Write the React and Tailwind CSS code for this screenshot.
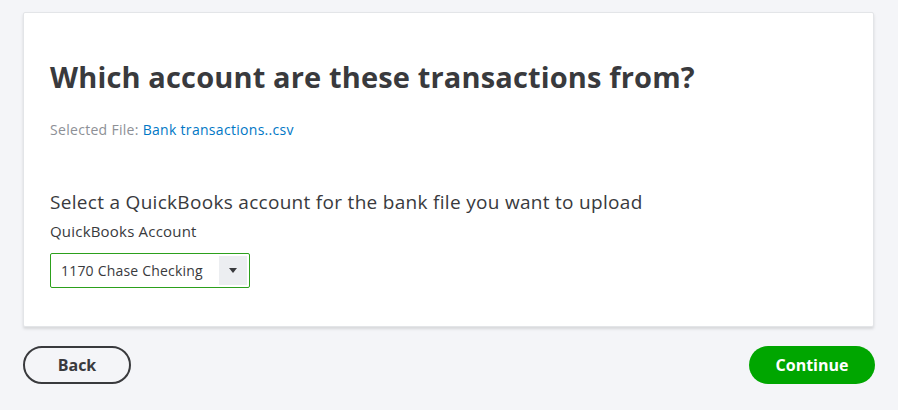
export default function App() {
  return (
    <div className="w-[898px] h-[410px] bg-[#f4f5f8] pt-[12px] px-[23px] overflow-hidden" style={{ fontFamily: '"Open Sans", "Lato", sans-serif' }}>
      <div className="w-[851px] h-[315px] bg-white border border-[#e3e5e8] rounded-[2px] shadow-[0_2px_3px_rgba(0,0,0,0.12)] pl-[26px] pt-[44px]">
        <h1 className="text-[29px] leading-[40px] font-bold text-[#393a3d] tracking-[0.15px]">Which account are these transactions from?</h1>
        <div className="mt-[24px] text-[14px] leading-[18px] text-[#8d9096] tracking-[0.3px]">
          Selected File: <span className="text-[#0077c5] font-medium">Bank transactions..csv</span>
        </div>
        <div className="mt-[51px] text-[19px] leading-[24px] text-[#393a3d] tracking-[0.3px]">Select a QuickBooks account for the bank file you want to upload</div>
        <div className="mt-[8px] text-[15px] leading-[18px] text-[#393a3d] tracking-[0.2px]">QuickBooks Account</div>
        <div className="mt-[13px] w-[200px] h-[35px] border border-[#2ca01c] rounded-[2px] flex items-center p-[2px]">
          <div className="flex-1 pl-[8px] text-[14px] text-[#393a3d] tracking-[0.2px]">1170 Chase Checking</div>
          <div className="w-[28px] h-full bg-[#eceef1] flex items-center justify-center">
            <svg width="8" height="5" viewBox="0 0 8 5"><path d="M0 0 L8 0 L4 5 Z" fill="#393a3d" /></svg>
          </div>
        </div>
      </div>
      <div className="mt-[19px] flex justify-between">
        <button className="w-[108px] h-[38px] rounded-full border-2 border-[#393a3d] text-[16px] font-bold text-[#393a3d] flex items-center justify-center">Back</button>
        <button className="w-[126px] h-[38px] rounded-full bg-[#00a600] text-[16px] font-bold text-white flex items-center justify-center">Continue</button>
      </div>
    </div>
  );
}
